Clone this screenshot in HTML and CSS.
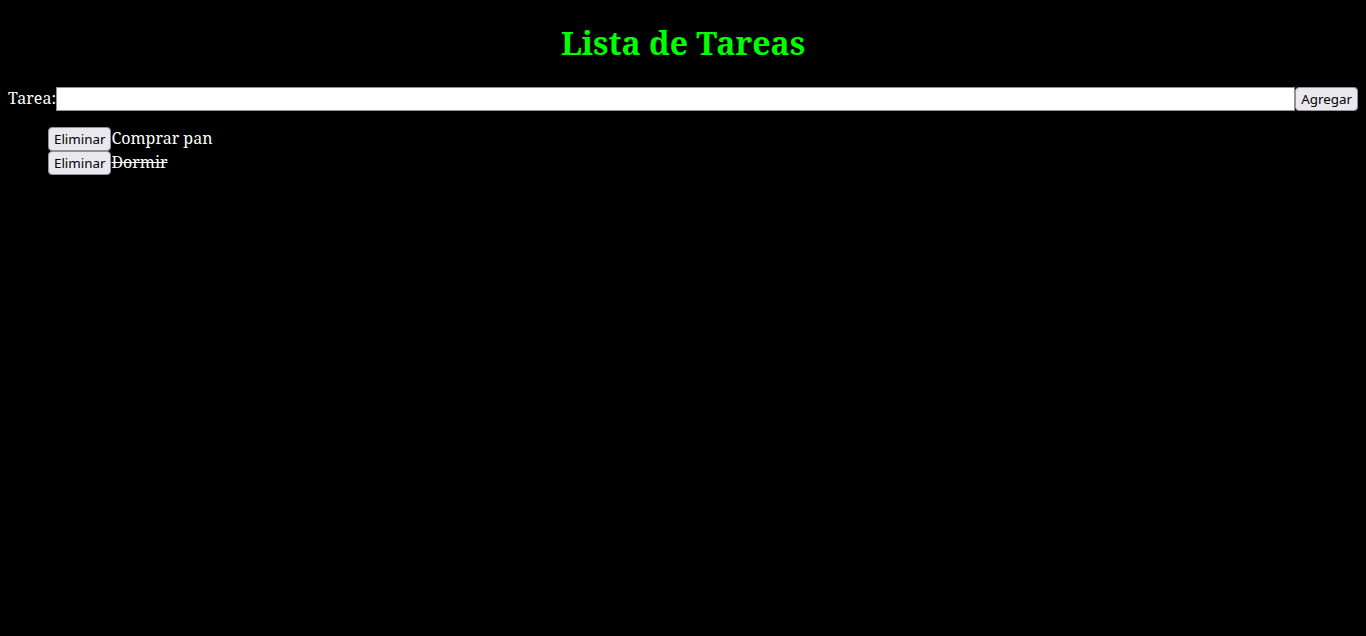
FILE: index.html
```html
<!DOCTYPE html>
<html lang="es">
<head>
<meta charset="utf-8">
<title>Lista de Tareas</title>
<link rel="stylesheet" href="styles.css">
</head>
<body>
<h1 class="title">Lista de Tareas</h1>
<form class="add-form">
  <label for="tarea" class="label">Tarea:</label>
  <input id="tarea" class="task-input" type="text">
  <button type="button" class="btn">Agregar</button>
</form>
<ul class="task-list">
  <li class="task"><button type="button" class="btn">Eliminar</button>Comprar pan</li>
  <li class="task done"><button type="button" class="btn">Eliminar</button>Dormir</li>
</ul>
</body>
</html>
```
FILE: styles.css
```css
html {
  background: #000;
}
body {
  margin: 0;
  padding: 0 8px 8px;
  background: #000;
  color: #fff;
  font-family: "Noto Serif", "DejaVu Serif", serif;
  font-size: 16px;
}
.title {
  color: #00ff00;
  text-align: center;
  font-size: 32px;
  margin: 21.44px 0 22.6px;
}
.add-form {
  display: flex;
}
.task-input {
  flex: 1;
  min-width: 0;
  margin: 0;
  padding: 1px 2px;
  border: 1px solid #8f8f9d;
  border-radius: 0;
  background: #fff;
  font-family: "Noto Sans", sans-serif;
  font-size: 13.33px;
}
.btn {
  margin: 0;
  padding: 2px 5px;
  border: 1px solid #8f8f9d;
  border-radius: 4px;
  background: #e9e9ed;
  color: #000;
  font-family: "Noto Sans", sans-serif;
  font-size: 13.33px;
  line-height: normal;
}
.task-list {
  list-style: none;
  margin: 16px 0;
  padding-left: 40px;
}
.task {
  line-height: normal;
}
.done {
  text-decoration: line-through;
}
```
